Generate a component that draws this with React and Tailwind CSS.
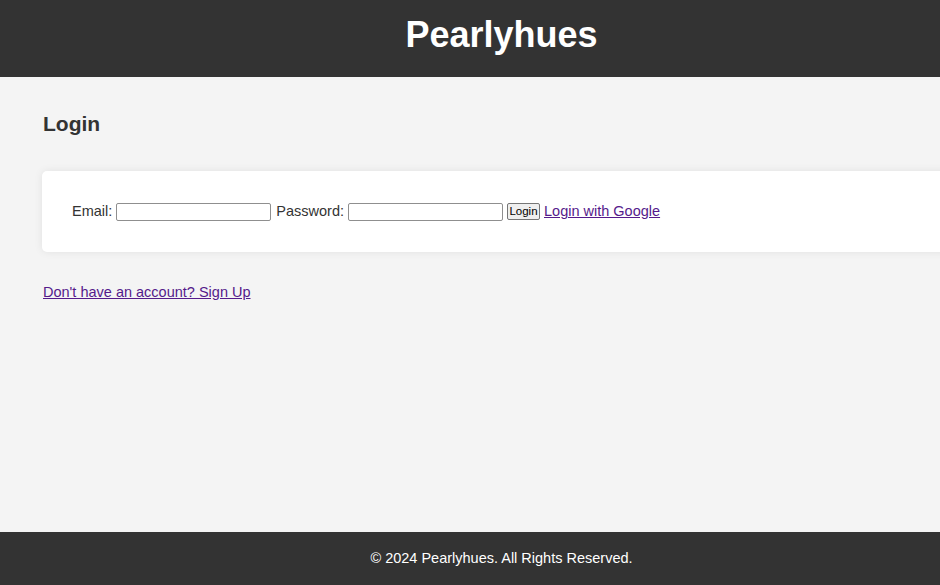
export default function App() {
  return (
    <div className="w-full min-h-screen overflow-hidden bg-[#f4f4f4] font-['Liberation_Sans',Arial,sans-serif]">
      <div className="w-[1003px] min-h-screen flex flex-col">
        {/* Header */}
        <header className="h-[77px] bg-[#333333] flex items-center justify-center pb-[8px]">
          <h1 className="text-[36px] font-bold text-white leading-none">Pearlyhues</h1>
        </header>

        {/* Main */}
        <main className="flex-1 px-[42px] pt-[35px]">
          <h2 className="text-[21px] font-bold text-[#333] leading-[24px] pl-px">Login</h2>

          <div className="mt-[35px] bg-white rounded-[5px] shadow-[0_0_8px_rgba(0,0,0,0.08)] px-[30px] h-[81px] flex items-center text-[14.5px] text-[#333]">
            <label className="mr-[4px]">Email:</label>
            <input
              type="email"
              className="w-[155px] h-[18px] border border-[#8f8f8f] rounded-[2px] bg-white"
            />
            <label className="ml-[5px] mr-[4px]">Password:</label>
            <input
              type="password"
              className="w-[155px] h-[18px] border border-[#8f8f8f] rounded-[2px] bg-white"
            />
            <button className="ml-[4px] w-[33px] h-[17px] border border-[#767676] rounded-[2px] bg-[#efefef] text-[11.5px] text-black leading-none flex items-center justify-center">
              Login
            </button>
            <a href="#" className="ml-[4px] text-[#551a8b] underline">
              Login with Google
            </a>
          </div>

          <div className="mt-[32px] text-[14.5px] leading-[16px]">
            <a href="#" className="text-[#551a8b] underline pl-px">
              Don't have an account? Sign Up
            </a>
          </div>
        </main>

        {/* Footer */}
        <footer className="h-[53px] bg-[#333333] flex items-center justify-center text-white text-[14.5px]">
          © 2024 Pearlyhues. All Rights Reserved.
        </footer>
      </div>
    </div>
  );
}
